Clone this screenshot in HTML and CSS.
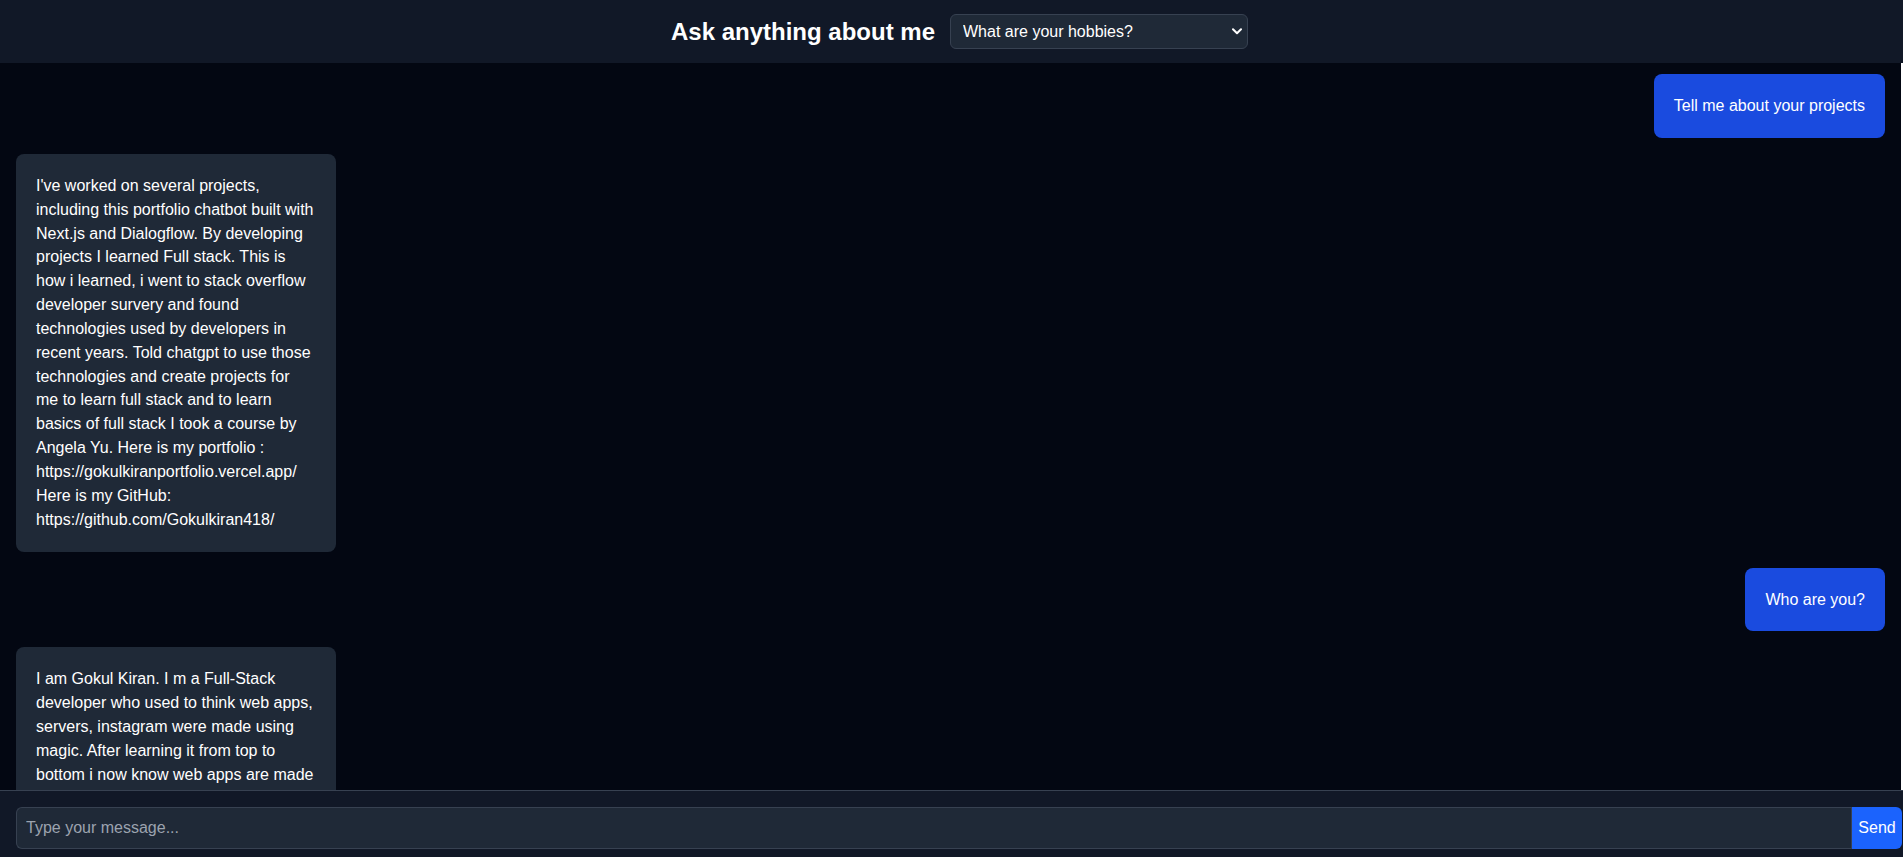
FILE: index.html
```html
<!DOCTYPE html>
<html lang="en">
<head>
<meta charset="utf-8">
<title>Ask anything about me</title>
<link rel="stylesheet" href="styles.css">
</head>
<body>
<div class="app">
  <header class="topbar">
    <h1 class="title">Ask anything about me</h1>
    <div class="select-wrap">
      <select class="question-select">
        <option>What are your hobbies?</option>
        <option>Tell me about your projects</option>
        <option>Who are you?</option>
      </select>
      <svg class="chevron" width="10" height="7" viewBox="0 0 10 7" aria-hidden="true"><path d="M1 1.2 L5 5.2 L9 1.2" fill="none" stroke="#fff" stroke-width="2" stroke-linecap="round" stroke-linejoin="round"/></svg>
    </div>
  </header>
  <main class="messages">
    <div class="msg msg-user">Tell me about your projects</div>
    <div class="msg msg-bot">I've worked on several projects, including this portfolio chatbot built with Next.js and Dialogflow. By developing projects I learned Full stack. This is how i learned, i went to stack overflow developer survery and found technologies used by developers in recent years. Told chatgpt to use those technologies and create projects for me to learn full stack and to learn basics of full stack I took a course by Angela Yu. Here is my portfolio : https://gokulkiranportfolio.vercel.app/ Here is my GitHub: https://github.com/Gokulkiran418/</div>
    <div class="msg msg-user">Who are you?</div>
    <div class="msg msg-bot">I am Gokul Kiran. I m a Full-Stack developer who used to think web apps, servers, instagram were made using magic. After learning it from top to bottom i now know web apps are made using code, databases and servers that anyone can learn to build.</div>
  </main>
  <footer class="composer">
    <input class="composer-input" type="text" placeholder="Type your message...">
    <button class="send-btn" type="button">Send</button>
  </footer>
</div>
</body>
</html>
```
FILE: styles.css
```css
html, body {
  margin: 0;
  padding: 0;
  height: 857px;
  overflow: hidden;
}
body {
  font-family: "Liberation Sans", Arial, sans-serif;
  background: #030712;
  color: #fff;
}
.app {
  display: flex;
  flex-direction: column;
  height: 865px;
}
.topbar {
  flex: 0 0 auto;
  height: 63px;
  box-sizing: border-box;
  background: #111827;
  display: flex;
  align-items: center;
  justify-content: center;
  gap: 15px;
  padding-left: 16px;
}
.title {
  margin: 0;
  font-size: 24px;
  line-height: 32px;
  font-weight: 700;
  color: #fff;
}
.select-wrap {
  position: relative;
  display: flex;
}
.question-select {
  appearance: none;
  -webkit-appearance: none;
  width: 298px;
  height: 35px;
  box-sizing: border-box;
  padding: 0 30px 0 12px;
  background: #1f2937;
  color: #fff;
  border: 1px solid #374151;
  border-radius: 6px;
  font-family: "Liberation Sans", Arial, sans-serif;
  font-size: 16px;
  outline: none;
}
.chevron {
  position: absolute;
  right: 6px;
  top: 14px;
  pointer-events: none;
}
.messages {
  flex: 1 1 auto;
  min-height: 0;
  overflow: hidden;
  display: flex;
  flex-direction: column;
  gap: 16px;
  padding: 11px 16px 16px 16px;
  border-right: 2px solid #fff;
  background: #030712;
}
.msg {
  box-sizing: border-box;
  max-width: 320px;
  padding: 20px;
  border-radius: 8px;
  font-size: 16px;
  line-height: 23.85px;
  color: #fff;
  flex: 0 0 auto;
}
.msg-user {
  align-self: flex-end;
  background: #1a4bdf;
}
.msg-bot {
  align-self: flex-start;
  background: #1f2937;
}
.composer {
  flex: 0 0 auto;
  display: flex;
  background: #111827;
  border-top: 1px solid #374151;
  padding: 16px 1px 16px 16px;
}
.composer-input {
  flex: 1 1 auto;
  height: 42px;
  box-sizing: border-box;
  padding: 0 9px;
  background: #1f2937;
  border: 1px solid #374151;
  border-right: none;
  border-radius: 6px 0 0 6px;
  color: #fff;
  font-family: "Liberation Sans", Arial, sans-serif;
  font-size: 16px;
  outline: none;
}
.composer-input::placeholder {
  color: #9ca3af;
}
.send-btn {
  flex: 0 0 auto;
  width: 51px;
  height: 42px;
  padding: 0;
  border: none;
  border-left: 1px solid #374151;
  background: #1b63fd;
  color: #fff;
  border-radius: 0 6px 6px 0;
  font-family: "Liberation Sans", Arial, sans-serif;
  font-size: 16px;
}
```
